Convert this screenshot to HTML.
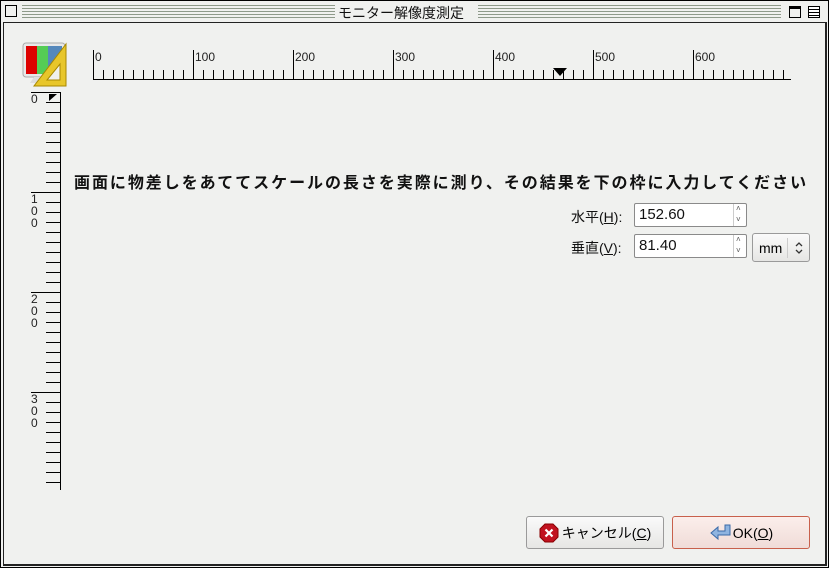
<!DOCTYPE html><html><head><meta charset="utf-8"><style>
body{margin:0;width:829px;height:568px;background:#f0f1ef;font-family:"Liberation Sans","Noto Sans CJK JP",sans-serif;position:relative;overflow:hidden}
.a{position:absolute}
.stripes{background:repeating-linear-gradient(#8e9a8a 0 1px,#f0f1ef 1px 3px)}
.lbl{font-size:14px;color:#111}
.inp{border:1px solid #8a8a8a;border-radius:2px;background:#fff;height:24px;box-sizing:border-box;font-size:15px;padding:2px 4px;color:#111}
.btn{border:1px solid #9a9a9a;border-radius:3px;background:linear-gradient(#fafafa,#e6e6e4);box-sizing:border-box;font-size:14px;display:flex;align-items:center;justify-content:center}
</style></head><body>
<div class="a" style="left:0;top:0;width:827px;height:566px;border:1px solid #000"></div>
<div class="a stripes" style="left:22px;top:5px;width:313px;height:13px"></div>
<div class="a stripes" style="left:478px;top:5px;width:303px;height:13px"></div>
<div class="a" style="left:5px;top:5px;width:12px;height:12px;border:1px solid #000;box-sizing:border-box"></div>
<div class="a" style="left:789px;top:6px;width:12px;height:12px;border:1px solid #000;box-sizing:border-box;border-top-width:3px"></div>
<div class="a" style="left:808px;top:6px;width:12px;height:12px;border:1px solid #000;box-sizing:border-box;background:repeating-linear-gradient(#fff 0 2px,#000 2px 3px)"></div>
<div class="a" style="left:338px;top:3px;font-size:14px;color:#111">モニター解像度測定</div>
<div class="a" style="left:3px;top:22px;width:821px;height:541px;border:1px solid #222;border-right-width:2px;border-bottom-width:2px"></div>
<svg class="a" style="left:22px;top:42px" width="46" height="46" viewBox="0 0 46 46">
<rect x="1" y="1" width="42" height="34" rx="3" fill="#e8e8e8" stroke="#aaa"/>
<rect x="4" y="4" width="11" height="28" fill="#d00"/><rect x="15" y="4" width="11" height="28" fill="#5c5"/><rect x="26" y="4" width="14" height="28" fill="#58b"/>
<path d="M12 35h16l4 6H8z" fill="#ddd"/>
<path d="M44 2L44 44 12 44z" fill="#e8c62a" stroke="#a88800"/><path d="M38 22L38 38 25 38z" fill="#f0f1ef" stroke="#a88800"/>
</svg>
<svg class="a" style="left:0;top:0" width="829" height="568">
<g stroke="#000" stroke-width="1" shape-rendering="crispEdges">
<line x1="93" y1="79.5" x2="791" y2="79.5"/>
<path d="M93.5 50v29 M193.5 50v29 M293.5 50v29 M393.5 50v29 M493.5 50v29 M593.5 50v29 M693.5 50v29"/>
<path id="mt" d="M103.5 70v9M113.5 70v9M123.5 70v9M133.5 70v9M143.5 70v9M153.5 70v9M163.5 70v9M173.5 70v9M183.5 70v9"/>
<use href="#mt" x="100"/><use href="#mt" x="200"/><use href="#mt" x="300"/><use href="#mt" x="400"/><use href="#mt" x="500"/><use href="#mt" x="600"/>
<line x1="60.5" y1="92" x2="60.5" y2="490"/>
<path d="M31 92.5h29 M31 192.5h29 M31 292.5h29 M31 392.5h29"/>
<path id="vt" d="M46 102.5h14M46 112.5h14M46 122.5h14M46 132.5h14M46 142.5h14M46 152.5h14M46 162.5h14M46 172.5h14M46 182.5h14"/>
<use href="#vt" y="100"/><use href="#vt" y="200"/><use href="#vt" y="300"/>
<path d="M46 482.5h14"/>
</g>
<path d="M553 68h14l-7 8z" fill="#000"/>
<path d="M49 94h8l-8 7z" fill="#000"/>
<g font-size="12" fill="#222" font-family="Liberation Sans,sans-serif">
<text x="95" y="61">0</text><text x="195" y="61">100</text><text x="295" y="61">200</text><text x="395" y="61">300</text><text x="495" y="61">400</text><text x="595" y="61">500</text><text x="695" y="61">600</text>
<text x="31" y="103">0</text>
<text x="31" y="203">1</text><text x="31" y="215">0</text><text x="31" y="227">0</text>
<text x="31" y="303">2</text><text x="31" y="315">0</text><text x="31" y="327">0</text>
<text x="31" y="403">3</text><text x="31" y="415">0</text><text x="31" y="427">0</text>
</g></svg>
<div class="a" style="left:74px;top:169px;font-size:16px;font-weight:bold;letter-spacing:1.95px;color:#111;white-space:nowrap">画面に物差しをあててスケールの長さを実際に測り、その結果を下の枠に入力してください</div>
<div class="a lbl" style="left:571px;top:207px">水平(<u>H</u>):</div>
<div class="a lbl" style="left:571px;top:238px">垂直(<u>V</u>):</div>
<div class="a inp" style="left:634px;top:203px;width:113px">152.60</div>
<div class="a inp" style="left:634px;top:234px;width:113px">81.40</div>
<div class="a" style="left:733px;top:204px;width:1px;height:22px;background:#ccc"></div>
<div class="a" style="left:733px;top:235px;width:1px;height:22px;background:#ccc"></div>
<div class="a" style="left:736px;top:203px;font-size:8px;color:#555;line-height:11px">˄<br>˅</div>
<div class="a" style="left:736px;top:234px;font-size:8px;color:#555;line-height:11px">˄<br>˅</div>
<div class="a btn" style="left:752px;top:233px;width:58px;height:29px;justify-content:flex-start;padding-left:6px">mm<span style="width:1px;height:20px;background:#ccc;margin:0 6px 0 5px"></span><svg width="10" height="14" viewBox="0 0 10 14"><path d="M2 5l3-3 3 3M2 9l3 3 3-3" fill="none" stroke="#333" stroke-width="1.3"/></svg></div>
<div class="a btn" style="left:526px;top:516px;width:138px;height:33px"><svg width="20" height="20" viewBox="0 0 20 20" style="margin-right:3px"><path d="M6 1h8l5 5v8l-5 5H6l-5-5V6z" fill="#c1121f" stroke="#800"/><path d="M6.5 6.5l7 7M13.5 6.5l-7 7" stroke="#fff" stroke-width="2.2"/></svg>キャンセル(<u>C</u>)</div>
<div class="a btn" style="left:672px;top:516px;width:138px;height:33px;border-color:#c8604c;background:linear-gradient(#fbeeeb,#f0dcd8)"><svg width="24" height="20" viewBox="0 0 24 20"><path d="M16 2h5v10H9v4L2 10l7-6v4h7z" fill="#8fb4e0" stroke="#3a6aa8"/></svg>OK(<u>O</u>)</div>
</body></html>
